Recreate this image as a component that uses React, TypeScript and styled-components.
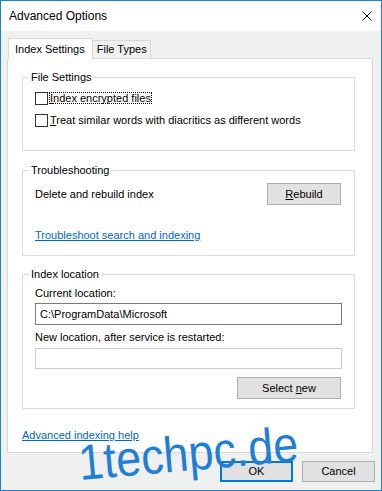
import React from 'react';
import styled, { createGlobalStyle } from 'styled-components';

const GlobalStyle = createGlobalStyle`
  html, body {
    margin: 0;
    padding: 0;
    background: #ffffff;
  }
  * {
    box-sizing: border-box;
  }
`;

const CloseIcon = () => (
  <svg width="10" height="10" viewBox="0 0 10 10">
    <path d="M0.5 0.5 L9.5 9.5 M9.5 0.5 L0.5 9.5" stroke="#000" strokeWidth="1" fill="none" />
  </svg>
);

interface CheckRowProps {
  mnemonic: string;
  rest: string;
  focused?: boolean;
}

const CheckRow = ({ mnemonic, rest, focused }: CheckRowProps) => (
  <CheckRowLayout>
    <CheckBox />
    <CheckLabel $focused={focused}>
      <u>{mnemonic}</u>
      {rest}
    </CheckLabel>
  </CheckRowLayout>
);

const App = () => {
  return (
    <>
      <GlobalStyle />
      <Window>
        <TitleBar>
          <span>Advanced Options</span>
          <CloseIcon />
        </TitleBar>

        <DialogBody>
          <TabStrip>
            <Tab $active>Index Settings</Tab>
            <Tab>File Types</Tab>
          </TabStrip>

          <TabPanel>
            <Group>
              <GroupTitle>File Settings</GroupTitle>
              <GroupContent $pt={2} $pb={19}>
                <CheckRow mnemonic="I" rest="ndex encrypted files" focused />
                <CheckRow mnemonic="T" rest="reat similar words with diacritics as different words" />
              </GroupContent>
            </Group>

            <Group $mt={12}>
              <GroupTitle>Troubleshooting</GroupTitle>
              <GroupContent $pt={5} $pb={12}>
                <ActionRow>
                  <span>Delete and rebuild index</span>
                  <PushButton $width={74}>
                    <u>R</u>ebuild
                  </PushButton>
                </ActionRow>
                <LinkText $mt={23}>Troubleshoot search and indexing</LinkText>
              </GroupContent>
            </Group>

            <Group $mt={11}>
              <GroupTitle>Index location</GroupTitle>
              <GroupContent $pt={4} $pb={9}>
                <FieldLabel>Current location:</FieldLabel>
                <TextBox $mt={2} readOnly value="C:\ProgramData\Microsoft" />
                <FieldLabel $mt={5}>New location, after service is restarted:</FieldLabel>
                <TextBox $mt={3} $disabled $height={21} readOnly value="" />
                <ButtonRow>
                  <PushButton $width={104}>
                    Select <u>n</u>ew
                  </PushButton>
                </ButtonRow>
              </GroupContent>
            </Group>

            <LinkText $mt={19}>Advanced indexing help</LinkText>
          </TabPanel>

          <DialogButtons>
            <PushButton $width={73} $height={21} $default>
              OK
            </PushButton>
            <PushButton $width={73} $height={21}>
              Cancel
            </PushButton>
          </DialogButtons>
        </DialogBody>

        <Watermark>1techpc.de</Watermark>
      </Window>
    </>
  );
};

export default App;

const Window = styled.div`
  position: relative;
  width: 382px;
  height: 491px;
  border: 1px solid #1a82d6;
  display: flex;
  flex-direction: column;
  overflow: hidden;
  background: #f0f0f0;
  font-family: 'Liberation Sans', Arial, sans-serif;
  font-size: 11px;
  color: #000000;
`;

const TitleBar = styled.div`
  flex: none;
  height: 30px;
  display: flex;
  align-items: center;
  justify-content: space-between;
  padding: 0 9px 0 8px;
  background: #ffffff;
  font-size: 12px;
  color: #000000;

  svg {
    display: block;
  }
`;

const DialogBody = styled.div`
  flex: 1;
  display: flex;
  flex-direction: column;
  padding: 7px 6px 8px 6px;
`;

const TabStrip = styled.div`
  display: flex;
  align-items: flex-end;
  height: 20px;
  padding-left: 1px;
`;

const Tab = styled.div<{ $active?: boolean }>`
  flex: none;
  display: flex;
  align-items: center;
  height: ${({ $active }) => ($active ? '21px' : '18px')};
  margin-bottom: ${({ $active }) => ($active ? '-1px' : '0')};
  padding: ${({ $active }) => ($active ? '0 7px 0 6px' : '0 3px 0 4px')};
  border: 1px solid #d9d9d9;
  border-bottom: none;
  border-left: ${({ $active }) => ($active ? '1px solid #d9d9d9' : 'none')};
  background: ${({ $active }) => ($active ? '#ffffff' : '#f0f0f0')};
  position: relative;
  z-index: ${({ $active }) => ($active ? 1 : 0)};
  line-height: 15px;
`;

const TabPanel = styled.div`
  flex: none;
  width: 366px;
  height: 395px;
  display: flex;
  flex-direction: column;
  padding: 11px 17px 0 14px;
  border: 1px solid #d9d9d9;
  background: #ffffff;
`;

const Group = styled.fieldset<{ $mt?: number }>`
  margin: ${({ $mt }) => $mt ?? 0}px 0 0 0;
  padding: 0;
  min-width: 0;
  border: 1px solid #dcdcdc;
`;

const GroupTitle = styled.legend`
  margin-left: 6px;
  padding: 0 2px;
  line-height: 15px;
`;

const GroupContent = styled.div<{ $pt: number; $pb: number }>`
  display: flex;
  flex-direction: column;
  align-items: flex-start;
  padding: ${({ $pt, $pb }) => `${$pt}px 12px ${$pb}px 12px`};
  line-height: 15px;
`;

const CheckRowLayout = styled.div`
  display: flex;
  align-items: center;
  height: 22px;
`;

const CheckBox = styled.span`
  flex: none;
  width: 13px;
  height: 13px;
  border: 1px solid #333333;
  background: #ffffff;
`;

const CheckLabel = styled.span<{ $focused?: boolean }>`
  margin-left: 1px;
  line-height: 10px;
  border: 1px ${({ $focused }) => ($focused ? 'dotted #000000' : 'solid transparent')};
  white-space: nowrap;
`;

const ActionRow = styled.div`
  align-self: stretch;
  display: flex;
  align-items: center;
  justify-content: space-between;
  padding-right: 1px;
`;

const PushButton = styled.div<{ $width: number; $height?: number; $default?: boolean }>`
  flex: none;
  width: ${({ $width }) => $width}px;
  height: ${({ $height }) => $height ?? 22}px;
  line-height: ${({ $height, $default }) => ($height ?? 22) - ($default ? 4 : 2)}px;
  text-align: center;
  white-space: nowrap;
  border: ${({ $default }) => ($default ? '2px solid #0078d7' : '1px solid #adadad')};
  background: #e1e1e1;
  color: #000000;
`;

const LinkText = styled.span<{ $mt?: number }>`
  margin-top: ${({ $mt }) => $mt ?? 0}px;
  line-height: 15px;
  color: #0066cc;
  text-decoration: underline;
  align-self: flex-start;
`;

const FieldLabel = styled.span<{ $mt?: number }>`
  margin-top: ${({ $mt }) => $mt ?? 0}px;
  line-height: 15px;
`;

const TextBox = styled.input<{ $mt?: number; $disabled?: boolean; $height?: number }>`
  display: block;
  margin: ${({ $mt }) => $mt ?? 0}px 0 0 0;
  width: 307px;
  height: ${({ $height }) => $height ?? 22}px;
  padding: 0 4px;
  border: 1px solid ${({ $disabled }) => ($disabled ? '#cccccc' : '#7a7a7a')};
  border-radius: 0;
  background: #ffffff;
  font-family: 'Liberation Sans', Arial, sans-serif;
  font-size: 11px;
  color: #000000;
  outline: none;
`;

const ButtonRow = styled.div`
  align-self: stretch;
  display: flex;
  justify-content: flex-end;
  margin-top: 8px;
  padding-right: 1px;
`;

const DialogButtons = styled.div`
  display: flex;
  justify-content: flex-end;
  gap: 9px;
  margin-top: 8px;
`;

const Watermark = styled.div`
  position: absolute;
  left: 79px;
  top: 437px;
  font-family: 'Liberation Sans', Arial, sans-serif;
  font-size: 50px;
  line-height: 1;
  color: #1f7fd7;
  white-space: nowrap;
  transform-origin: 0 41px;
  transform: rotate(-5deg) scaleX(0.9);
  pointer-events: none;
`;
